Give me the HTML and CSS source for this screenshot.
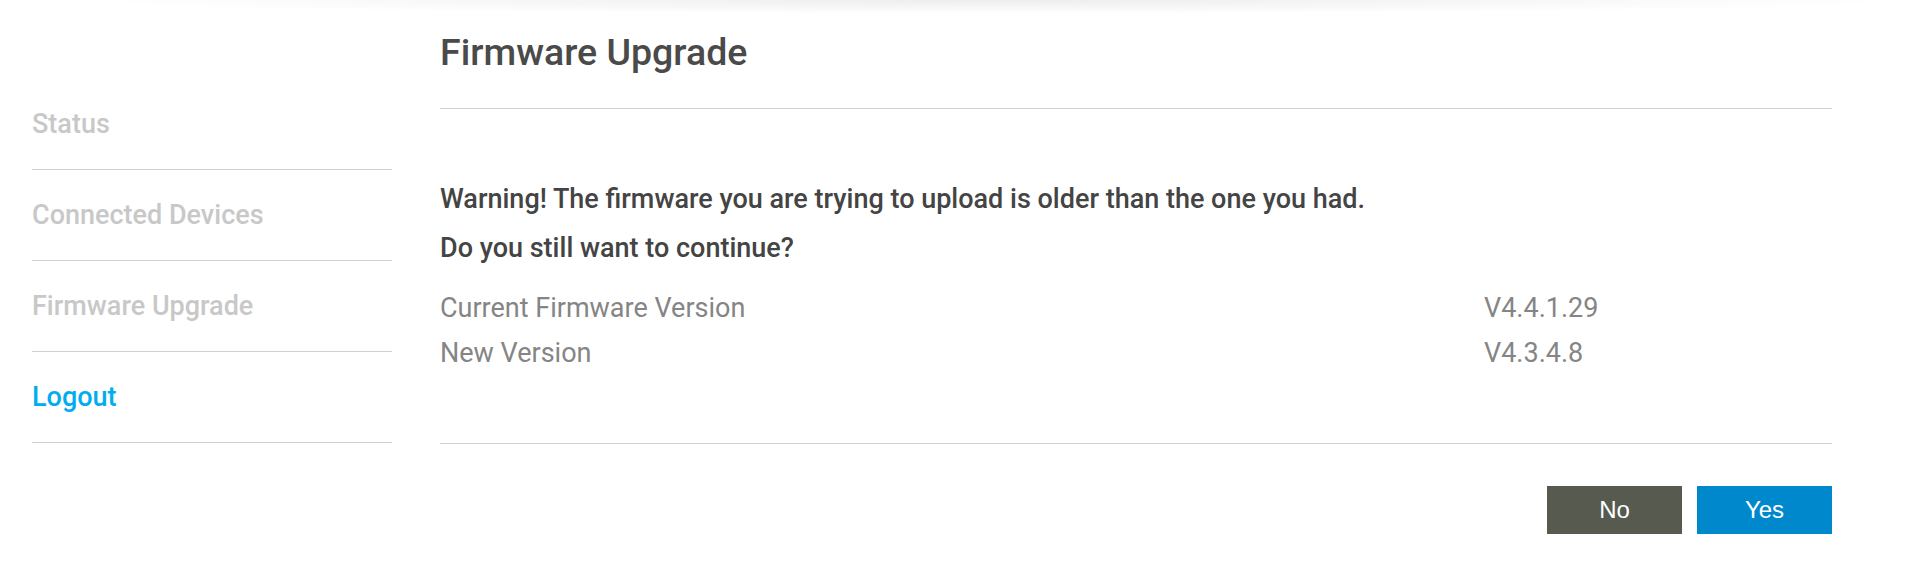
FILE: index.html
```html
<!DOCTYPE html>
<html lang="en">
<head>
    <meta charset="UTF-8">
    <title>Firmware Upgrade</title>
    <link rel="stylesheet" href="styles.css">
</head>
<body>
    <div class="shade"></div>

    <div class="page">
        <ul class="side-nav">
            <li><a href="#">Status</a></li>
            <li><a href="#">Connected Devices</a></li>
            <li><a href="#">Firmware Upgrade</a></li>
            <li><a href="#" class="logout">Logout</a></li>
        </ul>

        <div class="main">
            <div class="header">
                <h1>Firmware Upgrade</h1>
            </div>

            <div class="body">
                <p class="warning">Warning! The firmware you are trying to upload is older than the one you had.</p>
                <p class="warning">Do you still want to continue?</p>

                <div class="versions">
                    <span>Current Firmware Version</span>
                    <span>V4.4.1.29</span>
                    <span>New Version</span>
                    <span>V4.3.4.8</span>
                </div>
            </div>

            <div class="actions">
                <button class="btn btn-no">No</button>
                <button class="btn btn-yes">Yes</button>
            </div>
        </div>
    </div>
</body>
</html>
```

FILE: styles.css
```css
body {
    margin: 0;
    background: #fff;
    font-family: Roboto, "Liberation Sans", sans-serif;
    color: #4a4a4a;
}

.shade {
    height: 14px;
    margin-bottom: -14px;
    background: radial-gradient(ellipse 48% 100% at 52% 0, rgba(0, 0, 0, 0.07), rgba(0, 0, 0, 0) 100%);
}

.page {
    display: flex;
    align-items: flex-start;
}

/* left menu */
.side-nav {
    list-style: none;
    margin: 79px 0 0 32px;
    padding: 0;
    width: 360px;
    flex-shrink: 0;
}
.side-nav li {
    height: 90px;
    display: flex;
    align-items: center;
    border-bottom: 1px solid #cfcfcf;
}
.side-nav a {
    font-size: 27px;
    font-weight: 500;
    color: #c8c8c8;
    text-decoration: none;
}
.side-nav a.logout {
    color: #00aeef;
}

/* right panel */
.main {
    margin-left: 48px;
    width: 1392px;
}
.header {
    padding: 29px 0 33px;
    border-bottom: 1px solid #cfcfcf;
}
.header h1 {
    margin: 0;
    font-size: 37.5px;
    line-height: 46px;
    font-weight: 500;
    color: #4a4a4a;
}

.body {
    padding: 66px 0 67px;
    border-bottom: 1px solid #cfcfcf;
}
.warning {
    margin: 0;
    font-size: 27px;
    line-height: 49px;
    font-weight: 500;
    color: #444;
}
.versions {
    margin-top: 13px;
    display: grid;
    grid-template-columns: 75% 25%;
    font-size: 27px;
    line-height: 45px;
    color: #858585;
}

.actions {
    display: flex;
    justify-content: flex-end;
    gap: 15px;
    margin-top: 42px;
}
.btn {
    width: 135px;
    height: 48px;
    border: none;
    border-radius: 0;
    font-family: "Liberation Sans", Arial, sans-serif;
    font-size: 24px;
    color: #fff;
    cursor: pointer;
}
.btn-no {
    background: #575a4f;
}
.btn-yes {
    background: #0088cc;
}
```
